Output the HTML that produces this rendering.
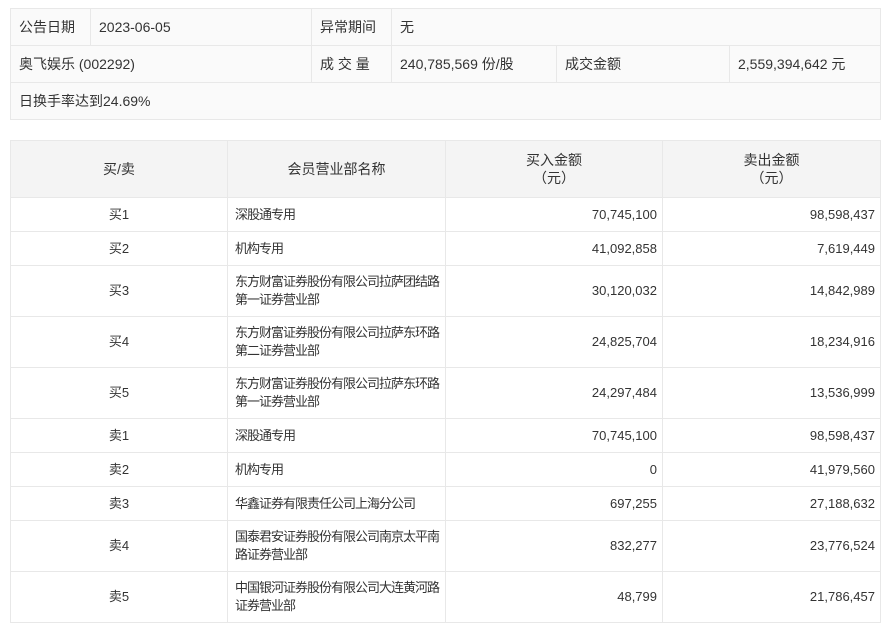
<!DOCTYPE html>
<html><head><meta charset="utf-8"><style>
body{margin:0;background:#fff;font-family:"Liberation Sans","Noto Sans CJK SC",sans-serif;font-size:13px;color:#333;}
table{border-collapse:collapse;table-layout:fixed;position:absolute;left:10px;width:870px;}
td{border:1px solid #e8e8e8;padding:0 8px;box-sizing:border-box;line-height:18px;white-space:nowrap;}
#t1{top:8px;background:#fafafa;font-size:14px;}
#t1 td{height:37px;}
#t2{top:140px;}
#t2 th{background:#f4f4f4;border:1px solid #e8e8e8;font-weight:normal;height:57px;line-height:18px;padding:0;box-sizing:border-box;font-size:14px;}
#t2 td.c{text-align:center}
#t2 td.r{text-align:right;padding-right:5px}
#t2 td.l{padding-left:7px;letter-spacing:-1px}
.h1 td{height:34px}
.h2 td{height:51px}
</style></head><body>
<table id="t1">
<colgroup><col style="width:80px"><col style="width:221px"><col style="width:80px"><col style="width:165px"><col style="width:173px"><col style="width:151px"></colgroup>
<tr><td>公告日期</td><td>2023-06-05</td><td>异常期间</td><td colspan="3">无</td></tr>
<tr><td colspan="2">奥飞娱乐 (002292)</td><td>成 交 量</td><td>240,785,569 份/股</td><td>成交金额</td><td>2,559,394,642 元</td></tr>
<tr><td colspan="6">日换手率达到24.69%</td></tr>
</table>
<table id="t2">
<colgroup><col style="width:217px"><col style="width:218px"><col style="width:217px"><col style="width:218px"></colgroup>
<tr><th>买/卖</th><th>会员营业部名称</th><th>买入金额<br>（元）</th><th>卖出金额<br>（元）</th></tr>
<tr class="h1"><td class="c">买1</td><td class="l">深股通专用</td><td class="r">70,745,100</td><td class="r">98,598,437</td></tr>
<tr class="h1"><td class="c">买2</td><td class="l">机构专用</td><td class="r">41,092,858</td><td class="r">7,619,449</td></tr>
<tr class="h2"><td class="c">买3</td><td class="l">东方财富证券股份有限公司拉萨团结路<br>第一证券营业部</td><td class="r">30,120,032</td><td class="r">14,842,989</td></tr>
<tr class="h2"><td class="c">买4</td><td class="l">东方财富证券股份有限公司拉萨东环路<br>第二证券营业部</td><td class="r">24,825,704</td><td class="r">18,234,916</td></tr>
<tr class="h2"><td class="c">买5</td><td class="l">东方财富证券股份有限公司拉萨东环路<br>第一证券营业部</td><td class="r">24,297,484</td><td class="r">13,536,999</td></tr>
<tr class="h1"><td class="c">卖1</td><td class="l">深股通专用</td><td class="r">70,745,100</td><td class="r">98,598,437</td></tr>
<tr class="h1"><td class="c">卖2</td><td class="l">机构专用</td><td class="r">0</td><td class="r">41,979,560</td></tr>
<tr class="h1"><td class="c">卖3</td><td class="l">华鑫证券有限责任公司上海分公司</td><td class="r">697,255</td><td class="r">27,188,632</td></tr>
<tr class="h2"><td class="c">卖4</td><td class="l">国泰君安证券股份有限公司南京太平南<br>路证券营业部</td><td class="r">832,277</td><td class="r">23,776,524</td></tr>
<tr class="h2"><td class="c">卖5</td><td class="l">中国银河证券股份有限公司大连黄河路<br>证券营业部</td><td class="r">48,799</td><td class="r">21,786,457</td></tr>
</table>
</body></html>
